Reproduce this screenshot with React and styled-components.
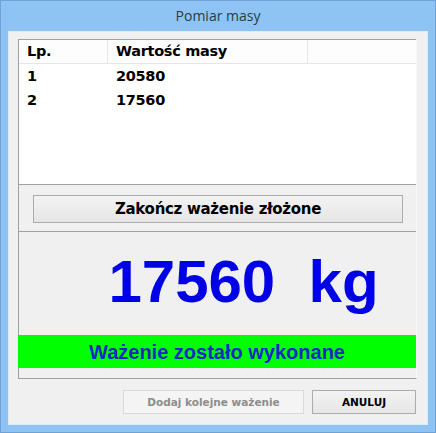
import React from "react";
import styled, { createGlobalStyle } from "styled-components";

const Global = createGlobalStyle`
  html, body { margin: 0; padding: 0; background: #8ec4f3; }
  * { box-sizing: border-box; }
`;

const Window = styled.div`
  width: 436px;
  height: 433px;
  background: #8ec4f3;
  border: 1px solid #6fa3d8;
  display: flex;
  flex-direction: column;
`;

const TitleBar = styled.div`
  height: 30px;
  display: flex;
  align-items: center;
  justify-content: center;
  font-family: "Open Sans", "Liberation Sans", sans-serif;
  font-size: 14px;
  color: #2b3a4a;
  padding-bottom: 1px;
`;

const Client = styled.div`
  flex: 1;
  margin: 0 7px 7px 7px;
  background: #f0f0f0;
  border: 1px solid #dcecfb;
  display: flex;
  flex-direction: column;
  padding: 7px 10px 0 9px;
`;

const Panel = styled.div`
  border-left: 1px solid #a0a0a0;
  border-right: 1px solid #f8f8f8;
  border-bottom: 1px solid #a0a0a0;
  display: flex;
  flex-direction: column;
  height: 340px;
`;

const List = styled.div`
  background: #ffffff;
  border-top: 1px solid #a0a0a0;
  height: 146px;
  border-bottom: 1px solid #a0a0a0;
  display: flex;
  flex-direction: column;
`;

const Grid = styled.div`
  display: grid;
  grid-template-columns: 89px 200px 1fr;
  font-family: "DejaVu Sans", Verdana, sans-serif;
  font-weight: bold;
  font-size: 14.5px;
  color: #000;
`;

const HeadCell = styled.div`
  height: 24px;
  line-height: 23px;
  padding-left: 8px;
  background: #fdfdfd;
  border-bottom: 1px solid #e6e6e6;
  border-right: ${(p) => (p.$last ? "none" : "1px solid #e6e6e6")};
  letter-spacing: -0.3px;
`;

const Cell = styled.div`
  height: 24px;
  line-height: 24px;
  padding-left: 8px;
  letter-spacing: -0.3px;
`;

const ButtonArea = styled.div`
  height: 47px;
  display: flex;
  align-items: center;
  justify-content: center;
  border-bottom: 1px solid #a0a0a0;
`;

const BigButton = styled.button`
  width: 370px;
  height: 28px;
  margin-left: 1px;
  margin-top: 1px;
  border: 1px solid #acacac;
  background: linear-gradient(#f3f3f3, #e6e6e6);
  font-family: "DejaVu Sans", Verdana, sans-serif;
  font-weight: bold;
  font-size: 15px;
  color: #000;
  letter-spacing: -0.3px;
  padding: 0;
`;

const Display = styled.div`
  flex: 1;
  display: flex;
  align-items: center;
  justify-content: center;
  font-family: "Liberation Sans", Arial, sans-serif;
  font-weight: bold;
  font-size: 60px;
  color: #0000e6;
  white-space: pre;
  padding-left: 52px;
  padding-bottom: 4px;
`;

const Status = styled.div`
  height: 33px;
  margin-left: -1px;
  margin-bottom: 10px;
  background: #00ff00;
  display: flex;
  align-items: center;
  justify-content: center;
  font-family: "Liberation Sans", Arial, sans-serif;
  font-weight: bold;
  font-size: 20px;
  color: #1428c8;
  padding-top: 1px;
`;

const Footer = styled.div`
  flex: 1;
  display: flex;
  justify-content: flex-end;
  align-items: flex-start;
  gap: 8px;
  padding-top: 11px;
  padding-right: 1px;
`;

const FooterButton = styled.button`
  width: ${(p) => p.$w}px;
  height: 24px;
  border: 1px solid ${(p) => (p.disabled ? "#d9d9d9" : "#acacac")};
  background: ${(p) =>
    p.disabled ? "#f4f4f4" : "linear-gradient(#f3f3f3, #e6e6e6)"};
  font-family: "DejaVu Sans", Verdana, sans-serif;
  font-weight: bold;
  font-size: 10.5px;
  color: ${(p) => (p.disabled ? "#8d8d8d" : "#000")};
  padding: 0;
`;

const rows = [
  ["1", "20580"],
  ["2", "17560"],
];

export default function App() {
  return (
    <>
      <Global />
      <Window>
        <TitleBar>Pomiar masy</TitleBar>
        <Client>
          <Panel>
            <List>
              <Grid>
                <HeadCell>Lp.</HeadCell>
                <HeadCell>Wartość masy</HeadCell>
                <HeadCell $last />
                {rows.map(([a, b]) => (
                  <React.Fragment key={a}>
                    <Cell>{a}</Cell>
                    <Cell>{b}</Cell>
                    <Cell />
                  </React.Fragment>
                ))}
              </Grid>
            </List>
            <ButtonArea>
              <BigButton>Zakończ ważenie złożone</BigButton>
            </ButtonArea>
            <Display>{"17560  kg"}</Display>
            <Status>Ważenie zostało wykonane</Status>
          </Panel>
          <Footer>
            <FooterButton $w={181} disabled>
              Dodaj kolejne ważenie
            </FooterButton>
            <FooterButton $w={104}>ANULUJ</FooterButton>
          </Footer>
        </Client>
      </Window>
    </>
  );
}
